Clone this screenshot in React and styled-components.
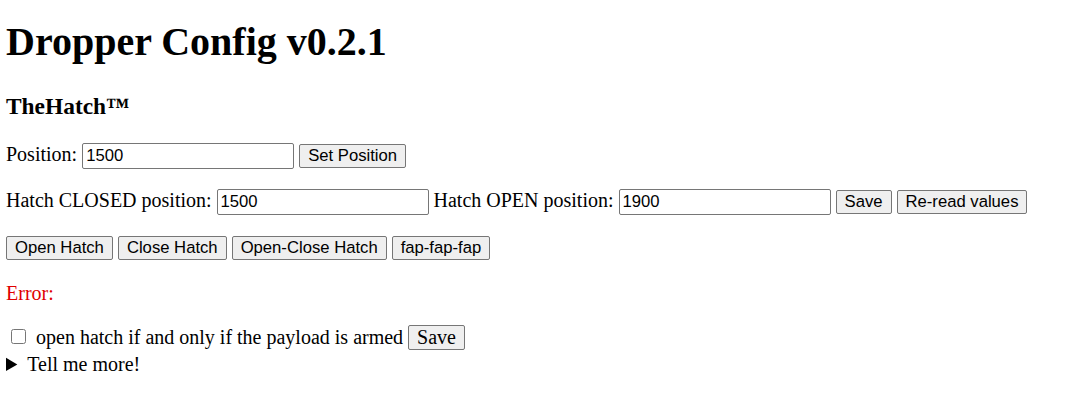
import React from "react";
import styled, { createGlobalStyle } from "styled-components";

const Global = createGlobalStyle`
  html, body { margin: 0; padding: 0; background: #fff; }
  body {
    font-family: "Liberation Serif", "Times New Roman", serif;
    font-size: 20px;
    color: #000;
  }
`;

const Page = styled.div`
  padding: 0 6px;
  display: flow-root;
`;

const Title = styled.h1`
  font-size: 40px;
  font-weight: bold;
  margin: 18px 0 28px;
`;

const Section = styled.h3`
  font-size: 23.4px;
  font-weight: bold;
  margin: 0 0 23.4px;
`;

const Row = styled.p`
  margin: 0 0 ${(p) => p.$gap || "20px"};
  white-space: nowrap;
`;

const TextInput = styled.input`
  box-sizing: border-box;
  width: 212px;
  height: 26px;
  font-family: "Liberation Sans", Arial, sans-serif;
  font-size: 16.67px;
  padding: 1px 3px;
  border: 1px solid #767676;
  border-radius: 2px;
  background: #fff;
  color: #000;
  margin: 0;
  vertical-align: baseline;
`;

const Button = styled.button`
  box-sizing: border-box;
  height: ${(p) => (p.$serif ? "25px" : "24px")};
  font-family: ${(p) =>
    p.$serif ? `"Liberation Serif", "Times New Roman", serif` : `"Liberation Sans", Arial, sans-serif`};
  font-size: ${(p) => (p.$serif ? "20px" : "16.67px")};
  padding: 0 8px;
  border: 1px solid #767676;
  border-radius: 2px;
  background: #efefef;
  color: #000;
  margin: 0;
  vertical-align: baseline;
`;

const ErrorText = styled.p`
  margin: 0 0 20px;
  color: #e00000;
`;

const CheckRow = styled.p`
  margin: 0;
  white-space: nowrap;
`;

const Check = styled.input`
  width: 15px;
  height: 15px;
  margin: 3px 5px 3px 5px;
  vertical-align: baseline;
`;

const More = styled.details`
  margin: 3px 0 0;
`;

const Summary = styled.summary`
  cursor: pointer;
`;

export default function App() {
  return (
    <>
      <Global />
      <Page>
        <Title>Dropper Config v0.2.1</Title>
        <Section>TheHatch™</Section>
        <Row>
          Position: <TextInput defaultValue="1500" /> <Button>Set Position</Button>
        </Row>
        <Row>
          Hatch CLOSED position: <TextInput defaultValue="1500" /> Hatch OPEN position:{" "}
          <TextInput defaultValue="1900" /> <Button>Save</Button> <Button>Re-read values</Button>
        </Row>
        <Row $gap="22px">
          <Button>Open Hatch</Button> <Button>Close Hatch</Button>{" "}
          <Button>Open-Close Hatch</Button> <Button>fap-fap-fap</Button>
        </Row>
        <ErrorText>Error: </ErrorText>
        <CheckRow>
          <Check type="checkbox" /> open hatch if and only if the payload is armed{" "}
          <Button $serif>Save</Button>
        </CheckRow>
        <More>
          <Summary>Tell me more!</Summary>
        </More>
      </Page>
    </>
  );
}
